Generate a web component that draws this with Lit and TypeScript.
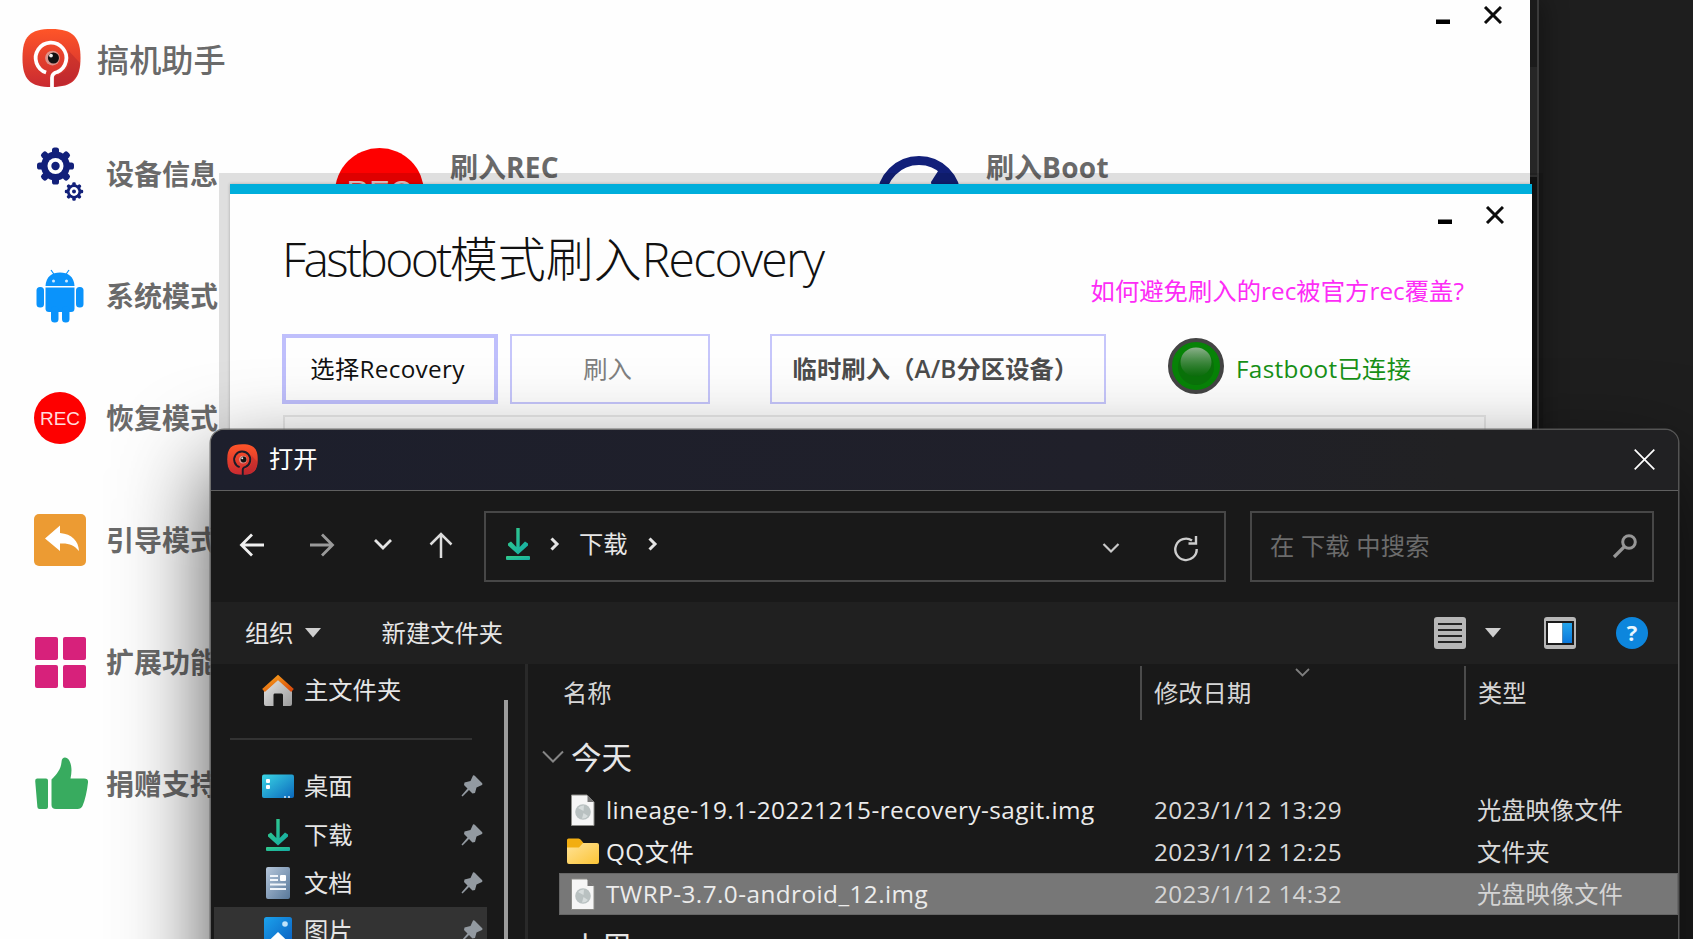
import { LitElement, html, css, svg } from "lit";
import { customElement } from "lit/decorators.js";
import { classMap } from "lit/directives/class-map.js";

const logo = (line: string, id: string) => svg`
  <defs><linearGradient id=${id} x1="0" y1="0" x2="0" y2="1">
    <stop offset="0" stop-color="#ff5528"/><stop offset="1" stop-color="#c92a31"/>
  </linearGradient></defs>
  <path d="M30 .5C52 .5 59.500 9 59.500 30S52 59.500 30 59.500 .5 52 .5 30 8 .5 30 .5Z" fill="url(#${id})"/>
  <path d="M33 49C46 44 50 38 47 22L59 35C58 50 50 57 33 59Z" fill="#a51f2a" opacity=".35"/>
  <path d="M24.500 44.800A15.600 15.600 0 1 1 36 44.200Q30.500 45.600 30.500 50V60" fill="none" stroke=${line} stroke-width="3.800"/>
  <circle cx="31" cy="30" r="7.500" fill="#d8d8d8" opacity=".55"/>
  <circle cx="32" cy="30" r="5.600" fill="#111"/>
  <circle cx="29.500" cy="27.500" r="1.900" fill="#eee"/>`;

const gear = (cx: number, cy: number, r: number, hole: number, dot: number) => svg`
  <g transform="translate(${cx} ${cy})">
    <circle r=${r * 0.78} fill="#12207a"/>
    ${[0, 45, 90, 135].map((a) => svg`<rect x=${-r * 0.19} y=${-r} width=${r * 0.38} height=${r * 2} rx=${r * 0.14} fill="#12207a" transform="rotate(${a})"/>`)}
    <circle r=${hole} fill="#fff"/><circle r=${dot} fill="#12207a"/>
  </g>`;

const menuIcons = {
  gears: svg`${gear(21.5, 18, 18.500, 8, 4.200)}${gear(40, 43.500, 9.200, 4.400, 2)}`,
  android: svg`<g fill="#0a93fb" transform="translate(0 -1.500)">
    <path d="M11.500 17.500C12 8 18 4 26 4S40 8 40.500 17.500Z"/>
    <path d="M17 1.500l3.500 5M35 1.500l-3.500 5" stroke="#0a93fb" stroke-width="1.200"/>
    <path d="M11.500 19H40.500V40Q40.500 43.500 37 43.500H15Q11.500 43.500 11.500 40Z"/>
    <rect x="2.500" y="18.500" width="7.500" height="20.500" rx="3.500"/><rect x="42" y="18.500" width="7.500" height="20.500" rx="3.500"/>
    <rect x="17" y="38" width="7.500" height="16" rx="3.500"/><rect x="28" y="38" width="7.500" height="16" rx="3.500"/></g>
    <circle cx="19.500" cy="11" r="1.500" fill="#cfeaff"/><circle cx="32.500" cy="11" r="1.500" fill="#cfeaff"/>`,
  rec: svg`<circle cx="26" cy="26" r="26" fill="#fe0000"/>
    <text x="26" y="33" text-anchor="middle" font-family="Liberation Sans, Arial, sans-serif" font-size="19" font-weight="400" fill="#ffdcdc">REC</text>`,
  reply: svg`<rect width="52" height="52" rx="5" fill="#ec9b33"/>
    <path d="M11 24.500L26 11.500V19C38 20 44.500 27 45 37C40 31 35 29 26 29.500V37Z" fill="#fff"/>`,
  grid: svg`<g fill="#d7217b"><rect x="1" y="1" width="23" height="23" rx="2"/><rect x="29" y="1" width="23" height="23" rx="2"/>
    <rect x="1" y="29" width="23" height="23" rx="2"/><rect x="29" y="29" width="23" height="23" rx="2"/></g>`,
  thumb: svg`<g fill="#38ab5f" transform="translate(0 -1)"><path d="M3 21.500H12Q14 21.500 14 23.500V50Q14 52 12 52H5.500Q3.500 52 3.400 50L1.200 24Q1 21.500 3 21.500Z"/>
    <path d="M17.500 22.500C23 17 27 12 27.500 5C28 -1 33 0 35 3C38 8 38 15 36.500 21.500H50Q54.500 21.500 54 25.500C53 35 51 43 48.500 49Q47 52 43.500 52H22Q17.500 52 17.500 48Z"/></g>`,
};

const download = (id: string) => svg`
  <defs><linearGradient id=${id} x1="0" y1="0" x2="1" y2="1"><stop offset="0" stop-color="#36ce88"/><stop offset="1" stop-color="#12aaa6"/></linearGradient></defs>
  <path d="M14.300 0H17.700V19L23 13.500L26 15.500V17.500L16 26.500L6 17.500V15.500L9 13.500L14.300 19Z" fill="url(#${id})"/>
  <rect x="4" y="28" width="24" height="4" rx="1" fill="url(#${id})"/>`;

const placeIcons: Record<string, unknown> = {
  home: svg`<defs><linearGradient id="hr" x1="0" y1="0" x2="1" y2="1"><stop offset="0" stop-color="#f7a01b"/><stop offset="1" stop-color="#d8480c"/></linearGradient>
    <linearGradient id="hw" x1="0" y1="0" x2="1" y2="1"><stop offset="0" stop-color="#e6e6e6"/><stop offset="1" stop-color="#9c9c9c"/></linearGradient></defs>
    <g transform="translate(0 1)"><path d="M2 16L16 3L30 16V29Q30 31 28 31H21V20Q21 18.500 19.500 18.500H12.500Q11.500 18.500 11.500 20V31H4Q2 31 2 29Z" fill="url(#hw)"/>
    <path d="M1.500 15.500L16 2.500L30.500 15.500" fill="none" stroke="url(#hr)" stroke-width="4"/></g>`,
  desktop: svg`<defs><linearGradient id="dk" x1="0" y1="0" x2="1" y2="1"><stop offset="0" stop-color="#3ad5e4"/><stop offset="1" stop-color="#0b68bd"/></linearGradient></defs>
    <rect y="4.500" width="32" height="23.500" rx="2" fill="url(#dk)"/><rect x="4" y="9" width="4" height="4" rx="1" fill="#fff"/><rect x="4" y="15" width="4" height="4" rx="1" fill="#fff"/>
    <path d="M22 27H24M26 27H28" stroke="#d9ecff" stroke-width="1.500"/>`,
  download: download("dl2"),
  docs: svg`<defs><linearGradient id="dc" x1="0" y1="0" x2="1" y2="1"><stop offset="0" stop-color="#b5c6da"/><stop offset="1" stop-color="#58789a"/></linearGradient></defs>
    <rect x="4" width="24" height="32" rx="2" fill="url(#dc)"/><path d="M8 9H16M8 13H16M8 17.500H24M8 22H24" stroke="#f1f5fa" stroke-width="2"/><rect x="18" y="8" width="6" height="6" rx="1" fill="#fff"/>`,
  pictures: svg`<defs><linearGradient id="pc" x1="0" y1="0" x2="1" y2="1"><stop offset="0" stop-color="#1ba2ec"/><stop offset="1" stop-color="#0a5ec0"/></linearGradient></defs>
    <rect x="2" y="2" width="28" height="28" rx="2.500" fill="url(#pc)"/><circle cx="23" cy="9" r="2.800" fill="#bfe3fb"/><path d="M4.500 28L16 17L27.500 28Q27 30 25 30H7Q5 30 4.500 28Z" fill="#fff"/>`,
};

const discFile = svg`<path d="M4.500 1H20L27 8V31.500H4.500Z" fill="#f6f6f6" stroke="#8c8c88" stroke-width="1"/>
  <path d="M20.500 1V8H27Z" fill="#777"/>
  <circle cx="16" cy="18" r="7.800" fill="#b9c1c1"/><path d="M11 14A7 7 0 0 1 17 11.500L16.500 17ZM21 22A7 7 0 0 1 15 24.500L16.500 19Z" fill="#d6dcdc"/>`;
const folder = svg`<defs><linearGradient id="fo" x1="0" y1="0" x2="1" y2="1"><stop offset="0" stop-color="#ffe398"/><stop offset="1" stop-color="#fbc436"/></linearGradient></defs>
  <path d="M0 4Q0 2.500 1.500 2.500H11.500Q13 2.500 14 4L16.500 7V14H0Z" fill="#f2ae12"/>
  <path d="M0 11.500H12L16 7H30Q32 7 32 9V26Q32 28 30 28H2Q0 28 0 26Z" fill="url(#fo)"/>`;

const menu = [
  ["gears", "设备信息"], ["android", "系统模式"], ["rec", "恢复模式"],
  ["reply", "引导模式"], ["grid", "扩展功能"], ["thumb", "捐赠支持"],
] as const;
const places = [["desktop", "桌面"], ["download", "下载"], ["docs", "文档"], ["pictures", "图片"]];
const files = [
  { disc: true, name: "lineage-19.1-20221215-recovery-sagit.img", date: "2023/1/12 13:29", type: "光盘映像文件" },
  { disc: false, name: "QQ文件", date: "2023/1/12 12:25", type: "文件夹" },
  { disc: true, name: "TWRP-3.7.0-android_12.img", date: "2023/1/12 14:32", type: "光盘映像文件", selected: true },
];

const base = css`
  :host { font-family: "Open Sans", "Noto Sans CJK SC", sans-serif; font-size: 24.300px; line-height: 1.25; white-space: nowrap; }
  * { box-sizing: border-box; }
  svg { display: block; flex: none; overflow: visible; }
`;

@customElement("window-controls")
class WindowControls extends LitElement {
  static styles = css`svg { display: block; }`;
  render() {
    return html`<svg width="66" height="18" viewBox="0 0 66 18">
      <rect x="0" y="13.500" width="14" height="4.500" fill="#000"/>
      <path d="M49 1L65 17M65 1L49 17" stroke="#0c0c0c" stroke-width="3"/></svg>`;
  }
}

@customElement("main-window")
class MainWindow extends LitElement {
  static styles = [base, css`
    :host { display: grid; grid-template-columns: 218px 1fr; background: #fefefe; color: #6a6a6a; }
    .side { padding-top: 28px; }
    .brand { display: flex; align-items: center; gap: 16px; height: 60px; padding-left: 22px; font-size: 32.200px; font-weight: 500; width: 300px; }
    .brand span { padding-top: 5px; }
    .menu { padding-top: 25px; }
    .item { display: flex; align-items: center; gap: 20px; height: 122px; padding-left: 34px; font-size: 28px; font-weight: 600; }
    .controls { display: flex; justify-content: flex-end; padding: 6px 28px 0 0; height: 148px; }
    .cards { display: grid; grid-template-columns: 542px 542px; padding-left: 117px; font-size: 28px; font-weight: 600; }
    .card { display: flex; gap: 26px; }
    .card.boot { gap: 25px; }
    .card.boot svg { margin-top: 8px; }
    .card span { padding-top: 2px; }
    .card b { font-weight: 700; letter-spacing: .3px; }
  `];
  render() {
    return html`
      <div class="side">
        <div class="brand"><svg width="59" height="60" viewBox="0 0 60 60">${logo("#fff", "lg1")}</svg><span>搞机助手</span></div>
        <div class="menu">${menu.map(([icon, label]) => html`
          <div class="item"><svg width="52" height="52" viewBox="0 0 52 52">${menuIcons[icon]}</svg><span>${label}</span></div>`)}</div>
      </div>
      <div>
        <div class="controls"><window-controls></window-controls></div>
        <div class="cards">
          <div class="card"><svg width="89" height="89" viewBox="0 0 89 89"><circle cx="44.500" cy="44.500" r="44.500" fill="#fe0000"/>
            <text x="44.500" y="54.500" text-anchor="middle" font-family="Liberation Sans, Arial, sans-serif" font-size="31" font-weight="400" fill="#fbd5d5">REC</text></svg><span>刷入<b>REC</b></span></div>
          <div class="card boot"><svg width="84" height="84" viewBox="0 0 84 84"><circle cx="42" cy="42" r="37.500" fill="none" stroke="#12207a" stroke-width="9"/>
            <path d="M63 12L54 26L56 40H82L76 22Z" fill="#12207a"/></svg><span>刷入<b>Boot</b></span></div>
        </div>
      </div>`;
  }
}

@customElement("flash-window")
class FlashWindow extends LitElement {
  static styles = [base, css`
    :host { display: block; background: #fefefe; border-top: 10px solid #00aedb; box-shadow: 0 0 3px rgba(0,0,0,.25), 0 0 0 11px rgba(0,0,0,.12); }
    .controls { display: flex; justify-content: flex-end; padding: 12px 28px 0 0; height: 36px; }
    .head { display: flex; justify-content: space-between; height: 104px; padding: 0 68px 0 52px; }
    h1 { margin: -1px 0 0; font-size: 48px; font-weight: 300; line-height: 60px; color: #111; }
    h1 .a { letter-spacing: -2.650px; }
    h1 .b { letter-spacing: -1.650px; }
    .link { color: #fd2cf6; padding-top: 46px; letter-spacing: .050px; }
    .actions { display: flex; height: 70px; padding-left: 52px; align-items: stretch; }
    .btn { display: flex; align-items: center; justify-content: center; border: 2px solid #c6c6fb; color: #808080; padding-right: 5px; }
    .pick { width: 216px; border: 4px solid #bfbffc; color: #111; margin-right: 12px; letter-spacing: .3px; }
    .flash { width: 200px; margin-right: 60px; }
    .temp { width: 336px; color: #4c4c4c; font-weight: 600; letter-spacing: .100px; }
    .status { display: flex; align-items: center; gap: 11px; margin-left: 61px; color: #179117; letter-spacing: .300px; }
    .status svg { margin-top: -6px; }
    .log { margin: 11px 46px 0 53px; height: 500px; border: 2px solid #e9e9e9; }
  `];
  render() {
    return html`
      <div class="controls"><window-controls></window-controls></div>
      <div class="head"><h1><span class="a">Fastboot</span>模式刷入<span class="b">Recovery</span></h1>
        <div class="link">如何避免刷入的rec被官方rec覆盖?</div></div>
      <div class="actions">
        <div class="btn pick">选择Recovery</div><div class="btn flash">刷入</div><div class="btn temp">临时刷入（A/B分区设备）</div>
        <div class="status"><svg width="58" height="58" viewBox="0 0 58 58">
          <defs><linearGradient id="led" x1="0" y1="0" x2="0" y2="1"><stop offset="0" stop-color="#8cb08c"/><stop offset="1" stop-color="#0d6a0d" stop-opacity=".6"/></linearGradient></defs>
          <circle cx="29" cy="29" r="26" fill="#078307" stroke="#444" stroke-width="4"/><circle cx="29" cy="30" r="18" fill="#0a720a"/>
          <ellipse cx="29" cy="25" rx="15.500" ry="14.500" fill="url(#led)"/></svg><span>Fastboot已连接</span></div>
      </div>
      <div class="log"></div>`;
  }
}

@customElement("open-dialog")
class OpenDialog extends LitElement {
  static styles = [base, css`
    :host { display: flex; flex-direction: column; overflow: hidden; border-radius: 13px 13px 0 0; background: #191919; color: #e6e6e6;
      box-shadow: 0 0 0 1.500px rgba(95,95,95,.85), 0 36px 90px rgba(0,0,0,.7); }
    .title { display: flex; align-items: center; height: 60px; padding: 0 23px 2px 16px; gap: 11px; color: #fff; flex: none;
      background: linear-gradient(90deg, #1d1f2c, #20202a 60%, #212123 85%); }
    .title span { flex: 1; }
    .nav { display: flex; align-items: center; height: 112px; padding-left: 29px; border-top: 1px solid #606060; flex: none; }
    .arrow { margin-top: -4px; }
    .box { display: flex; align-items: center; height: 71px; margin-top: -1px; border: 2px solid #474747; }
    .g1 { margin-left: 46px; } .g2 { margin-left: 37px; } .g3 { margin-left: 34px; }
    .address { width: 742px; margin-left: 31px; padding-left: 16px; }
    .address .crumb { padding: 0 20px 3px 21px; }
    .address .up { margin-top: -4px; }
    .grow { flex: 1; }
    .drop { margin: 4px 53px 0 0; } .reload { margin: 3px 25px 0 0; }
    .search { width: 404px; margin-left: 24px; padding: 0 15px 0 18px; justify-content: space-between; color: #6c6c6c; letter-spacing: .150px; }
    .tools { display: flex; align-items: center; height: 62px; padding: 0 30px 0 34px; background: #202020; flex: none; }
    .body { display: flex; flex: 1; min-height: 0; }
    .places { width: 276px; padding: 2px 0 0 3px; flex: none; }
    .place { display: flex; align-items: center; gap: 10px; height: 48.300px; padding: 0 4px 0 48px; }
    .place.hot { background: #333; }
    .place span { flex: 1; }
    .sep { height: 2px; margin: 24px 15px 22px 16px; background: #333; }
    .scroll { width: 4px; margin: 36px 17px 0 17px; background: #9c9c9c; }
    .split { width: 3px; background: #292929; }
    .list { flex: 1; min-width: 0; }
    .header { display: flex; height: 54px; margin-top: 2px; color: #d6d6d6; }
    .cell { display: flex; align-items: center; width: 324px; border-left: 2px solid #4b4b4b; padding-left: 12px; }
    .cell.name { width: 612px; border: 0; padding-left: 35px; }
    .cell.type { width: 212px; }
    .sort { align-self: flex-start; margin: 2px 0 0 44px; }
    .group { display: flex; align-items: center; gap: 7px; height: 40px; margin: 17px 0 12px 14px; font-size: 30.500px; }
    .group.next { margin-top: 12px; }
    .row { display: grid; grid-template-columns: 39px 548px 323px 1fr; align-items: center; height: 42px; margin-left: 31px; padding-left: 8px; color: #d8d8d8; }
    .row .fname { color: #ececec; letter-spacing: .450px; }
    .row .date { letter-spacing: .300px; }
    .row.selected { background: #777; box-shadow: inset 0 0 0 1px #666; height: 42px; }
    .row.selected .fname { color: #ececec; }
    .row.selected .meta { color: #d4d4d4; }
  `];
  render() {
    const chevron = svg`<path d="M1.500 2.500L7 8L1.500 13.500" fill="none" stroke="#e4e4e4" stroke-width="3"/>`;
    return html`
      <div class="title"><svg width="31" height="31" viewBox="0 0 60 60">${logo("#1b1c28", "lg2")}</svg><span>打开</span>
        <svg width="21" height="21" viewBox="0 0 21 21"><path d="M.7.7L20.300 20.300M20.300.7L.7 20.300" stroke="#fff" stroke-width="1.700"/></svg></div>
      <div class="nav">
        <svg class="arrow" width="24" height="24" viewBox="0 0 24 24"><path d="M24 12H2M12 1.500L1.500 12L12 22.500" fill="none" stroke="#efefef" stroke-width="2.800"/></svg>
        <svg class="arrow g1" width="24" height="24" viewBox="0 0 24 24"><path d="M0 12H22M12 1.500L22.500 12L12 22.500" fill="none" stroke="#9a9a9a" stroke-width="2.800"/></svg>
        <svg class="arrow g2" width="24" height="24" viewBox="0 0 24 24"><path d="M4 7L12 15L20 7" fill="none" stroke="#e4e4e4" stroke-width="2.800"/></svg>
        <svg class="arrow g3" width="24" height="24" viewBox="0 0 24 24"><path d="M12 25V1M1.500 11.500L12 1L22.500 11.500" fill="none" stroke="#dcdcdc" stroke-width="2.500"/></svg>
        <div class="box address">
          <svg class="up" width="32" height="32" viewBox="0 0 32 32">${download("dl1")}</svg>
          <svg class="up" width="24" height="16" viewBox="-16 0 24 16" >${chevron}</svg><span class="crumb">下载</span>
          <svg class="up" width="10" height="16" viewBox="0 0 10 16">${chevron}</svg><div class="grow"></div>
          <svg class="drop" width="18" height="12" viewBox="0 0 18 12"><path d="M1.500 2L9 9.500L16.500 2" fill="none" stroke="#c9c9c9" stroke-width="2.200"/></svg>
          <svg class="reload" width="26" height="26" viewBox="0 0 26 26"><path d="M19 5.500A10.700 10.700 0 1 0 23.700 14M23 1V8.500H15.500" fill="none" stroke="#cdcdcd" stroke-width="2.400"/></svg>
        </div>
        <div class="box search"><span>在 下载 中搜索</span>
          <svg width="24" height="24" viewBox="0 0 24 24"><circle cx="16" cy="8" r="6.300" fill="none" stroke="#969696" stroke-width="3"/><path d="M11.500 12.500L1 23" stroke="#969696" stroke-width="3.200"/></svg></div>
      </div>
      <div class="tools">
        <span>组织</span><svg width="88" height="10" viewBox="-11 0 88 10"><path d="M0 0H16L8 9.500Z" fill="#cfcfcf"/></svg><span>新建文件夹</span><div class="grow"></div>
        <svg width="32" height="32" viewBox="0 0 32 32"><rect width="32" height="32" rx="3" fill="#b7b7b7"/><path d="M4 7H28M4 13H28M4 19H28M4 25H28" stroke="#252525" stroke-width="2.200"/></svg>
        <svg width="78" height="10" viewBox="-19 0 78 10"><path d="M0 0H16L8 9.500Z" fill="#cfcfcf"/></svg>
        <svg width="32" height="32" viewBox="0 0 32 32"><defs><linearGradient id="pn" x1="0" y1="0" x2="0" y2="1"><stop offset="0" stop-color="#25a6ec"/><stop offset="1" stop-color="#0b78dc"/></linearGradient></defs>
          <rect width="32" height="32" rx="3" fill="#b7b7b7"/><rect x="2" y="4" width="28" height="24" fill="#1b1b1b"/><rect x="4" y="6" width="14.500" height="20" fill="#fff"/><rect x="18.500" y="6" width="9.500" height="20" fill="url(#pn)"/></svg>
        <svg width="72" height="32" viewBox="-40 0 72 32"><circle cx="16" cy="16" r="16" fill="#0d86dd"/><text x="16" y="24" text-anchor="middle" font-family="Open Sans, sans-serif" font-size="22" font-weight="700" fill="#e8f6ff">?</text></svg>
      </div>
      <div class="body">
        <div class="places">
          <div class="place"><svg width="32" height="32" viewBox="0 0 32 32">${placeIcons.home}</svg><span>主文件夹</span></div>
          <div class="sep"></div>
          ${places.map(([icon, label], i) => html`<div class=${classMap({ place: true, hot: i === 3 })}>
            <svg width="32" height="32" viewBox="0 0 32 32">${placeIcons[icon]}</svg><span>${label}</span>
            <svg width="22" height="22" viewBox="0 0 22 22"><path d="M12 .5Q13 0 14 1L21 8Q22 9 21 10L15.500 12.500L14 18L11.500 18.500L8 15L1.500 21.500L.5 20.500L6.500 13.500L3 10L3.500 7.500L9.500 6Z" fill="#939aa1"/></svg></div>`)}
        </div>
        <div class="scroll"></div><div class="split"></div>
        <div class="list">
          <div class="header"><div class="cell name">名称</div>
            <div class="cell">修改日期<svg class="sort" width="15" height="10" viewBox="0 0 15 10"><path d="M1 1L7.500 7.500L14 1" fill="none" stroke="#7e7e7e" stroke-width="1.800"/></svg></div>
            <div class="cell type">类型</div></div>
          <div class="group"><svg width="22" height="14" viewBox="0 0 22 14"><path d="M1 1.500L11 11.500L21 1.500" fill="none" stroke="#858585" stroke-width="2"/></svg><span>今天</span></div>
          ${files.map((f) => html`<div class=${classMap({ row: true, selected: !!f.selected })}>
            <svg width="32" height="32" viewBox="0 0 32 32">${f.disc ? discFile : folder}</svg>
            <span class="fname">${f.name}</span><span class="meta date">${f.date}</span><span class="meta">${f.type}</span></div>`)}
          <div class="group next"><svg width="22" height="14" viewBox="0 0 22 14"><path d="M1 1.500L11 11.500L21 1.500" fill="none" stroke="#858585" stroke-width="2"/></svg><span>上周</span></div>
        </div>
      </div>`;
  }
}

@customElement("app-root")
class AppRoot extends LitElement {
  static styles = css`
    :host { display: block; position: relative; width: 1693px; height: 939px; overflow: hidden; background: #1e1e1e; }
    main-window, flash-window, open-dialog, .edge { position: absolute; }
    .edge { box-sizing: border-box; left: 1500px; top: 0; width: 39px; height: 939px; border-right: 2px solid #3a3a3a; box-shadow: 4px 0 24px rgba(0,0,0,.35);
      background: linear-gradient(#1b1b1b 67px, #262626 67px, #262626 175px, #333 175px, #333 177px, #141414 177px); }
    main-window { left: 0; top: 0; width: 1530px; height: 939px; }
    flash-window { left: 230px; top: 184px; width: 1302px; height: 755px; }
    open-dialog { left: 211px; top: 430px; width: 1467px; height: 700px; }
  `;
  render() {
    return html`<div class="edge"></div><main-window></main-window><flash-window></flash-window><open-dialog></open-dialog>`;
  }
}
